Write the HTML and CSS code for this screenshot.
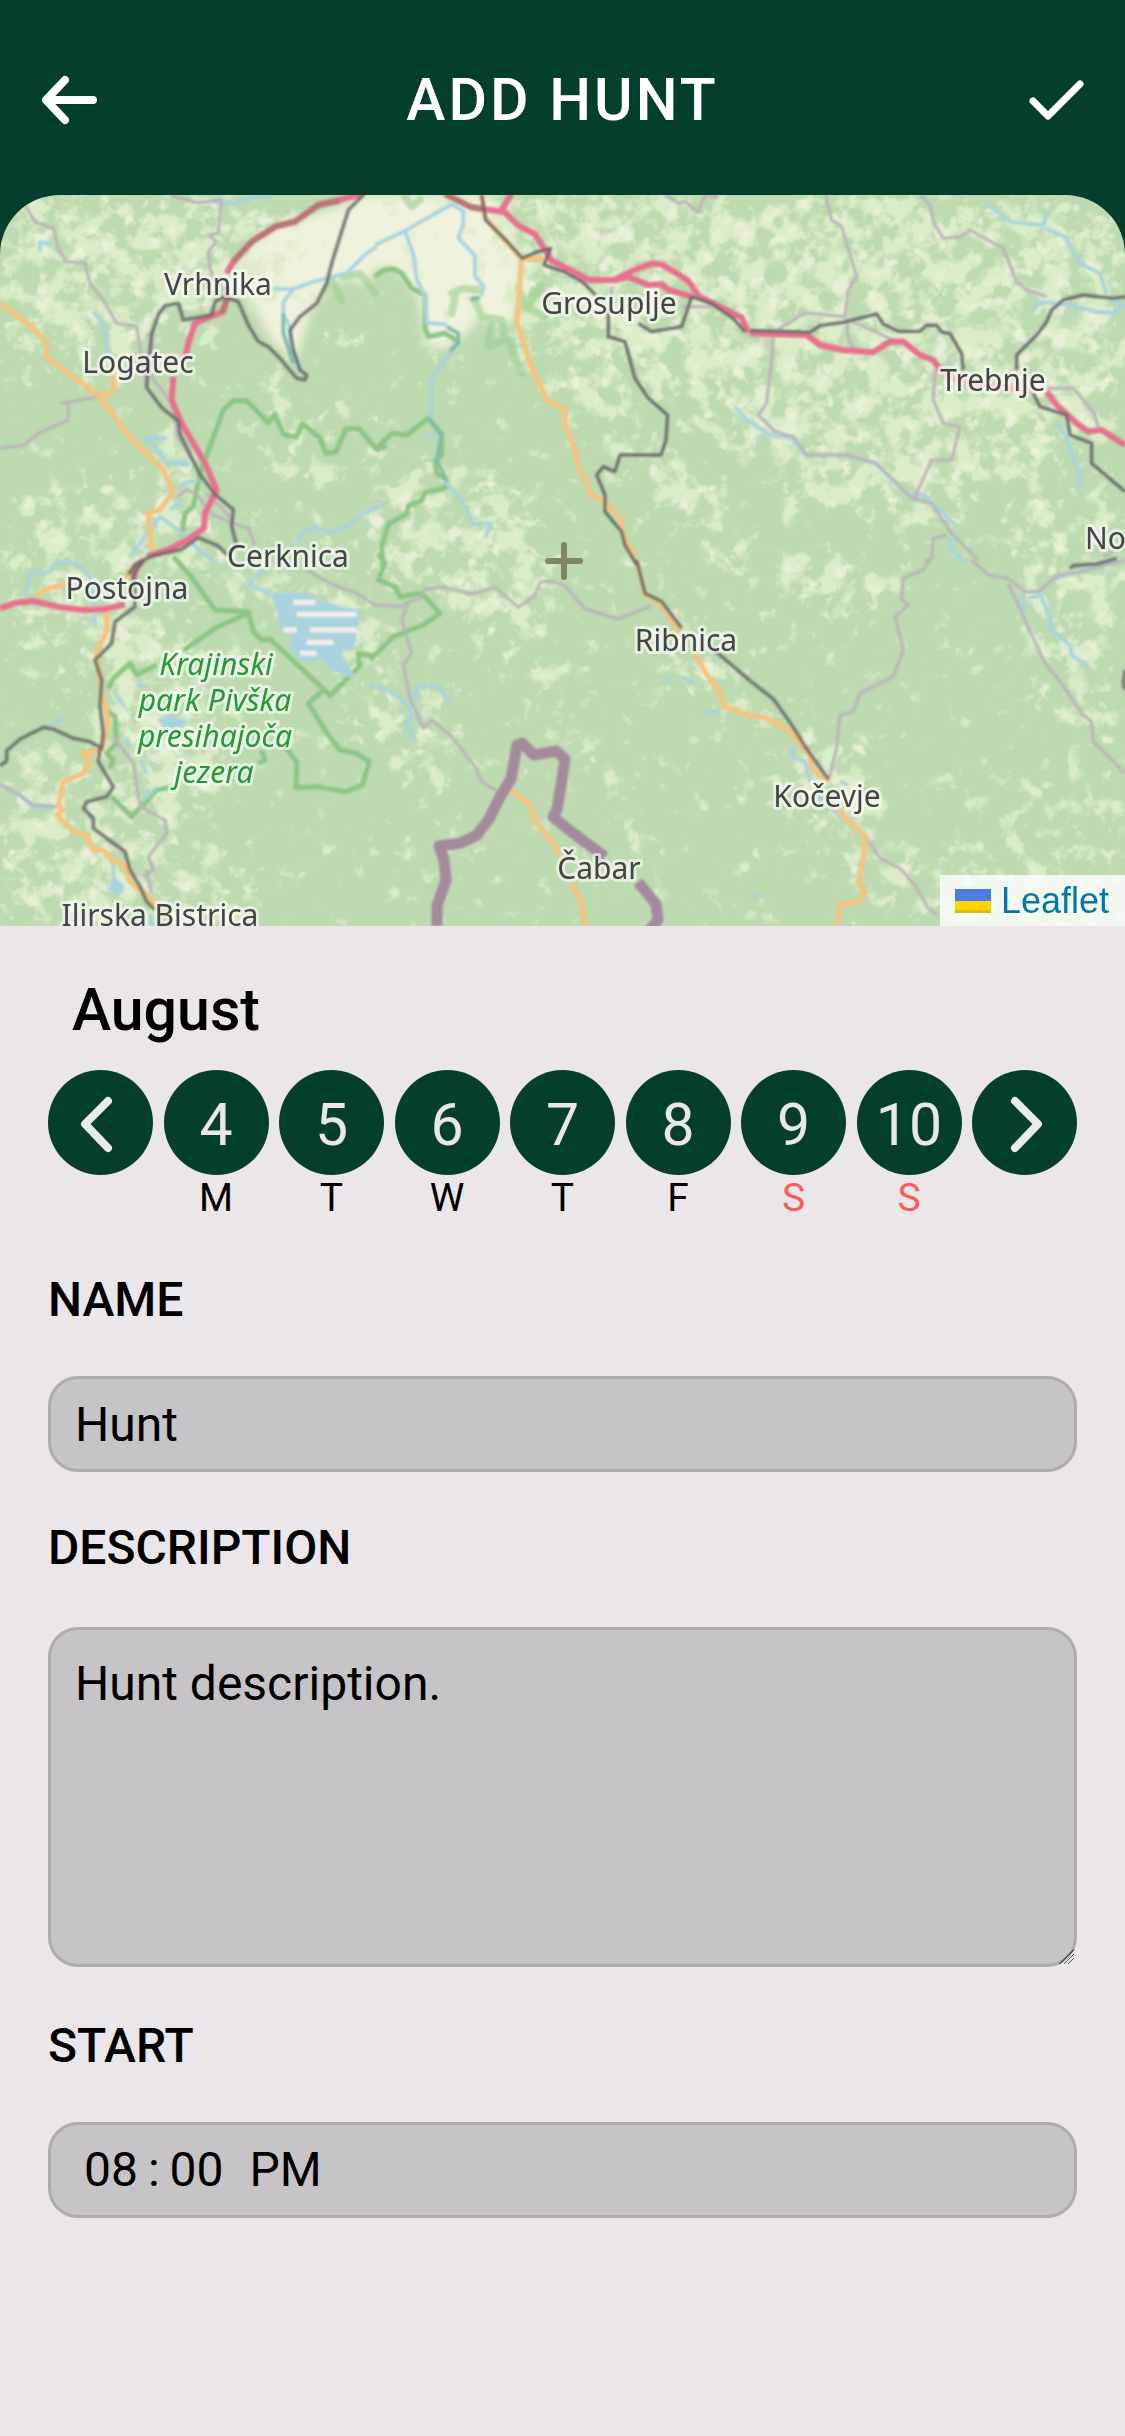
FILE: index.html
```html
<!DOCTYPE html>
<html lang="en">
<head>
<meta charset="utf-8">
<meta name="viewport" content="width=device-width, initial-scale=1">
<title>Add hunt</title>
<link rel="stylesheet" href="styles.css">
</head>
<body>
<header class="topbar">
  <button class="icon-button" type="button" aria-label="Back">
    <svg class="icon" viewBox="0 0 60 60"><path d="M26 10 7 30l19 20M8 30h46" stroke-width="8"/></svg>
  </button>
  <h1 class="title">ADD HUNT</h1>
  <button class="icon-button" type="button" aria-label="Save">
    <svg class="icon" viewBox="0 0 60 60"><path d="M7 31l15 15L54 14" stroke-width="7"/></svg>
  </button>
</header>

<main>
  <section class="map" aria-label="Map">
    <svg class="map-canvas" viewBox="0 0 1125 731">
      <defs>
        <filter id="meadow" x="0" y="0" width="1125" height="731" filterUnits="userSpaceOnUse" color-interpolation-filters="sRGB">
          <feGaussianBlur in="SourceAlpha" stdDeviation="14" result="density"/>
          <feTurbulence type="fractalNoise" baseFrequency=".045" numOctaves="4" seed="8"/>
          <feColorMatrix values="0 0 0 0 0  0 0 0 0 0  0 0 0 0 0  1 0 0 0 0" result="noise"/>
          <feComposite in="density" in2="noise" operator="arithmetic" k2=".3" k3="1"/>
          <feComponentTransfer result="patch"><feFuncA type="linear" slope="5" intercept="-3.55"/></feComponentTransfer>
          <feFlood flood-color="#dbedc8"/>
          <feComposite in2="patch" operator="in"/>
        </filter>
        <filter id="field" x="0" y="0" width="1125" height="731" filterUnits="userSpaceOnUse" color-interpolation-filters="sRGB">
          <feGaussianBlur in="SourceAlpha" stdDeviation="14" result="density"/>
          <feTurbulence type="fractalNoise" baseFrequency=".06" numOctaves="3" seed="21"/>
          <feColorMatrix values="0 0 0 0 0  0 0 0 0 0  0 0 0 0 0  1 0 0 0 0" result="noise"/>
          <feComposite in="density" in2="noise" operator="arithmetic" k2=".26" k3="1"/>
          <feComponentTransfer result="patch"><feFuncA type="linear" slope="4" intercept="-3.1"/></feComponentTransfer>
          <feFlood flood-color="#ebf1da"/>
          <feComposite in2="patch" operator="in"/>
        </filter>
        <filter id="soften"><feGaussianBlur stdDeviation="1"/></filter>
        <filter id="soft-edge" x="-10%" y="-10%" width="120%" height="120%"><feGaussianBlur stdDeviation="5"/></filter>
        <g id="open-land">
          <path d="M0 0h290v100l-60 10-60 40-60 30-40-20L0 90z"/>
          <path d="M0 90l60 60-20 50-40-10z" fill-opacity=".7"/>
          <path d="M500 0h625v230l-60 40-130 30-90 20-140-90-120-60-90-60z"/>
          <path d="M740 220l180 20 60 30-20 80-120-40-60 20z" fill-opacity=".7"/>
          <path d="M500 110l70 10 60 90 80 110 60 50-40 20-100-110-80-80z" fill-opacity=".8"/>
          <path d="M642 255l50 10 70 110-24 4-64-60z"/>
          <path d="M380 260l150 40 30 100-40 60-40-20-60-60-60 10z" fill-opacity=".95"/>
          <path d="M245 170h50l60 100-40 50-50-40z" fill-opacity=".6"/>
          <path d="M20 290h120l50 30-30 60-140 30z" fill-opacity=".8"/>
          <path d="M150 240h40l40 130-50 10z"/>
          <path d="M225 375h60l80 30 20 40-30 30-60-50-70-20z"/>
          <path d="M0 390h60l40 30-10 60-60-20-30-10z" fill-opacity=".8"/>
          <path d="M90 370l40 30 70 40 20 110-10 80-80 10-30-100z"/>
          <path d="M0 540l90 10 30 80 60 20 80 30v51H0z" fill-opacity=".85"/>
          <path d="M1010 300h115v250l-90-40-20-90z" fill-opacity=".8"/>
          <path d="M1040 560h85v171H960l-20-80z" fill-opacity=".5"/>
          <path d="M750 360h120l20 40-60 40-60-40z" fill-opacity=".9"/>
          <path d="M500 440l40-10 50 110 80 140-20 6-90-140z" fill-opacity=".6"/>
          <path d="M370 430l60 60 40 100-50 10-60-60z" fill-opacity=".8"/>
          <path d="M650 420l60 30 40 60-20 20-50-40z"/>
          <path d="M790 530l80 20 10 80 80 80-50 21-80-80-60-60z" fill-opacity=".9"/>
          <path d="M0 0h1125v731H0z" fill-opacity=".2"/>
        </g>
      </defs>

      <rect width="1125" height="731" fill="#bddab1"/>
      <!-- Ljubljana marshes -->
      <path class="plain" filter="url(#soft-edge)" d="M360 0h130l18 22 12 40 2 24-8 40-20 6-16-12-8 16-24 18-20-4-8-48-24-30-18 2-10 16-16-6-18 4-20 26-16 52-24-20-24-44-20-6 6-26 40-38 70-22z"/>
      <use href="#open-land" filter="url(#meadow)"/>
      <use href="#open-land" filter="url(#field)"/>

      <g filter="url(#soften)">
      <!-- Park boundaries -->
      <g class="park">
        <g transform="translate(0 -5) scale(.3333)">
          <path d="M545 1040l10-70 25-20 20-100 70-190 30-28h40l65 66 20-26 25 60 38 10 20-40 50 40 20 48 30-4 30-70h40l52 62 30-10"/>
          <path d="M975 300l20-30 30 60M1030 260l50-10 45 60" class="grove"/>
        </g>
        <g transform="translate(375 -5) scale(.3333)">
          <path d="M0 260q40-40 80-10l30 45 40 20v100l10 25 50-10 40 25M0 780l50-50 45 5 65-50 40 50v60l-20 20 5 35 30 20-5 25-60 12-10 25-40 15-5 25-55 30-20 70 5 60"/>
          <path d="M230 310l35-15 45 5M240 320l-10 50M300 330l20 50 60 10 10 60-50 20M350 400l-10 60M430 290l20 60 50-60M400 450l40 100M450 350l60 30M90 20l20 30 25-20" class="grove"/>
        </g>
        <g transform="translate(0 365) scale(.3333)">
          <path d="M520 -10l50 55 75 105 100 5 15 60 25 25 25-3 155 145 25 25 90-90-5-35 50 5M745 160l-95 42-100 70M470 315l-60 30-20-35-50 45-15 30M965 395l-40 35 60 95 35 45 50 10 38 25-20 70-50 20-90-15-60 3 3-75-40-55M785 570l10 30-20 10M520 680l-50 10-75 80-60-60M320 450l25 20 5 80-30 30 20 20-10 25"/>
        </g>
        <g transform="translate(375 365) scale(.3333)">
          <path d="M10 -20l20 30-20 50 50 20 15 30 60-10 20 15 40 45-50 35-90 35-70 70"/>
        </g>
      </g>

      <!-- Rivers and lakes -->
      <g class="water">
        <g transform="translate(0 -5) scale(.3333)">
          <path d="M120 185v-28l35 5M280 365l20 25 15 45 10 60M640 35l60 5 80-20 40 0M820 297h60l60-22 100-25 60-60 30-20M880 297l-30 40v35l20 40v50l40 90M435 745l30 25 35 50 60-5M440 740l60 5M520 820l50 5M540 900l10-20 45-10M510 960l40-30M390 1100l90-120 60 45 70 65 40 30M890 1065l20-40 40-15 40 20 60-25 40-35 50-20"/>
          <path d="M850 370v60l30 90" class="reed"/>
        </g>
        <g transform="translate(375 -5) scale(.3333)">
          <path d="M0 165l90-42 60-35 80-45 35 20v40l-15 40 50 55v60l25 30-5 30M90 123l25 70 10 75 25 50 5 80 60 5M240 460l-30 50-40 55v120M210 875l50 55 35 70h55l-20 45M1080 650l45 50M0 955l35-20M155 740l25-5"/>
          <path d="M215 410l35 20v30l-25 25M160 685l40 45-15 80 30 60M285 328l30-5" class="reed"/>
        </g>
        <g transform="translate(750 -5) scale(.3333)">
          <path d="M710 40l70 55 100 12 12-45M885 115l60 25 45 80 60 30 20 65M845 360l25-25 90 10 80 20 50 5 30-25-40-20M0 695l60 40 65 10 40 50h120l90 25 100 95h50l90 90M600 1040v30l30 35M915 695l35 45 20 60 20 50v40"/>
        </g>
        <g transform="translate(0 365) scale(.3333)">
          <path d="M75 110l15-70 60-5 30-30 50 5 40 40 15 150M790 30l-45 45 80 30M150 495l45-20M350 410l25 30M380 530l10 35M420 600l20 40M430 720l40-40M340 900v90M0 675l60 30 40 40 70-5M1115 375l10 5M453 1060v40M410 375l25 3"/>
          <path d="M825 105h110l10 18 80 22 50 10-10 60-10 50-30-5-5 30 40 60-70-30-20-30-60 10-40-40 15-30-40-30z" class="lake"/>
          <path d="M480 480l30-8 45 14-10 12-55-3zM345 960l20 15v15l-20 10-15-15z" class="lake"/>
          <path d="M880 127h66M890 163h180M850 210h40M930 210h140M920 247h80M900 280h50" class="stripe"/>
        </g>
        <g transform="translate(375 365) scale(.3333)">
          <path d="M0 380l40 10 60 45 10 35-20 20 35 55M115 420l15-40h60l35 50M870 345l15 25M920 350l35 20M990 455h40"/>
        </g>
        <g transform="translate(750 365) scale(.3333)">
          <path d="M820 100v60l20 60M835 115l35-10 30 60v40l60 50 5 30 50 35M130 555v40l35 10 15 60M270 665l25 10M200 700l90 90M620 0l30 3M900 60l100-30 100-30M5 1000l20 10"/>
        </g>
      </g>

      <!-- Secondary roads -->
      <g class="road">
        <g transform="translate(0 -5) scale(.3333)">
          <path d="M75 45l30 50 55 20 15 60 25 40 55 5 15 60 40 50 40 70 60 10 10 60 20 120M510 15l80 23 75-8-10 100-30 5 25 20-25 30 5 50 15 40M440 440l25-30M455 430v130l60 80 20 100 40 70M0 775l75-10 40-35 90-40v-50M180 640l120-20M530 920l30-20 30 10 40 60 70 30 45 15 20 50M620 910l80 80"/>
        </g>
        <g transform="translate(375 -5) scale(.3333)">
          <path d="M870 15l40 25 20-5 40 30 20-50 40 5M710 290v40M920 350h90"/>
        </g>
        <g transform="translate(750 -5) scale(.3333)">
          <path d="M225 10l20 80 30 20 45 150-25 40-10 80-120-12-80 50M290 390l5 60 20 30M300 390l140 65M510 15l30 30 10 50 30 50 50-5 30-20 100 55 40 100 30 25 60 20M890 595h80l60 70 20 60M555 540l-5 90 30 70 50 10-25 100h-60l-45 100-10 20M70 440l-5 70-15 130-25 35 50 50 55 15 40 55h120l90 25 105 105 60 15 60 90 80 80M590 1035l-40 10-5 60-20 10M1060 1100l65-30"/>
        </g>
        <g transform="translate(0 365) scale(.3333)">
          <path d="M340 530l60 80 20 130 75 40 5 40-55 70 15 40-30 20M440 930l15 70M0 675l60 30 40 30 70 5M920 30l70 40 80 30 55 35"/>
        </g>
        <g transform="translate(375 365) scale(.3333)">
          <path d="M0 135l80 5 20-15 35-10 15-28 60-5 80 20 70-20 70 60 50-35 15-40 25-5 50 15 60 70 100 30 100-40M100 130l-20 50 30 100-25 35 20 100 40 90 25-25 60 50 70 90 20 45 50 30"/>
        </g>
        <g transform="translate(750 365) scale(.3333)">
          <path d="M540 0l-20 30-60 25-5 60 20 20-40 35 25 100-30 80-100 50-20 55-40 10-10 100-25 100M665 0l50 45 60 10 50 40h40l60-50 70-10 130-35M775 70l50 110 60 130 50 60 60 90 30 25 5 60 95 95M350 835l40 60 60 30 45 50 40 70 30 20"/>
        </g>
      </g>

      <!-- Primary roads -->
      <g class="primary">
        <g transform="translate(0 -5) scale(.3333)">
          <path d="M0 340l95 70 45 50v40l80 60 80 60 40-20v-45M300 620l90 120 100 100 30 65-40 55-35 10 10 110"/>
        </g>
        <g transform="translate(375 -5) scale(.3333)">
          <path d="M320 15l10 65 50 60 60 65 70 5M440 205l-10 140-5 50 20 60 30 90 45 90 50 20v50l30 70 10 60 30 50 5 30 40 15 55 60 5 50 35 60"/>
        </g>
        <g transform="translate(0 365) scale(.3333)">
          <path d="M110 105l40-22 50-10M390 30l-10 30M320 150v60l-30 70 15 120 20 80-20 90-60 10 25 25-20 35-60 25-15 70 15 15-20 15 50 50 40 10 20 45 30 0 35 35 30 10 15 50 50 40 50 60"/>
        </g>
        <g transform="translate(375 365) scale(.3333)">
          <path d="M785 0l25 100 50 35 55 85M960 280l30 55 40 55 20 50 75 27M405 685l60 50 20 55 50 60 20 40M590 970l30 60 10 70"/>
        </g>
        <g transform="translate(750 365) scale(.3333)">
          <path d="M0 465l50 10 60 30 70 80 5 40 50 40M260 740l30 40 55 45-5 70-15 70 20 30-20 30-55 10-10 60"/>
        </g>
      </g>

      <!-- Motorways -->
      <g class="motorway">
        <g transform="translate(0 -5) scale(.3333)">
          <path d="M1095 10l-140 35-70 50-60 15-70 45-55 60-20 35M680 330l-10 35-40 15-45 20-20 60-10 45M520 560l-5 70 30 70 70 120 35 80-35 70-3 45-50 35-60 30-60 20"/>
          <path d="M1020 32l-65 13-70 50-60 15-70 45-55 60M680 290v40l-15 40" class="tunnel"/>
        </g>
        <g transform="translate(375 -5) scale(.3333)">
          <path d="M210 12l80 40 100 15 40 40 50 25 50 80 90 45 20 13h80l50-27 60-22 30 2 50 30 30 20 30 45 90 45 40 20 20 45M380 60l30-50M720 270l40-10 60 25 40-2 20 17 70 20"/>
          <path d="M210 12l80 40 40 6" class="tunnel"/>
        </g>
        <g transform="translate(750 -5) scale(.3333)">
          <path d="M0 430l170 5 40 30 70 15 90 7 50-32h40l50 40 40 15 20 30M890 605l30 40 60 55 35 25 40-5 70 45"/>
          <path d="M570 545l60 30 140 20 80 5" class="faded"/>
        </g>
        <g transform="translate(0 365) scale(.3333)">
          <path d="M430 0l-25 30-3 30M0 145l50-17 50-5 70 17 80 10 60-2 65-15"/>
        </g>
      </g>

      <!-- Railways -->
      <g class="rail">
        <g transform="translate(0 -5) scale(.3333)">
          <path d="M1090 15l-45 45-50 160-15 60-30 60-50 40-30 40 10 60 20 60 20 15-5 15-25-5-50-60-35-35-30-15-30-50-30-70-40-15-30 15-10 40-85 15-15-50-40 8-20 25-20 60-10 90-5 70 45 60 50 40 5 40 60 120 45 60 55 45-5 50 15 60-30 25-25-25-60-25-50 35-90 20-50 25-20 30"/>
        </g>
        <g transform="translate(375 -5) scale(.3333)">
          <path d="M320 15l12 75 60 60 50 55 45-20 40-10-20 50 60 20 55 30 40 40M700 350v90l50 15 30 110 40 60 58 50-5 75-15 45H735l-15 50-35-15-20 25 25 60v50l50 60 10 40 35 60M790 400l40 25 90-15 20-60 10-30 60 20 65 45 35 40"/>
        </g>
        <g transform="translate(750 -5) scale(.3333)">
          <path d="M0 422l100 2 80 3 30-20 70-10 100-25 20 30 45 22h65l20-18h30l15 20 25 5 35 60 5 50M800 540v-45l60-60 30-40 15-35 35-30 60-15 90 10 40-5M850 610l20 40 80 25 10 60 65 25v60l100 85"/>
        </g>
        <g transform="translate(0 365) scale(.3333)">
          <path d="M430 0l-30 45 5 95-60 45-10 65-50 50 20 60-5 80 10 80-5 45-35-20-50-10-60-28-30-5-70 35-40 35v30l-20 15M300 565l-5 40 45 75-20 30-60 15-10 20 30 30 0 30 95 70 15 55 30 50 20 45 25 25"/>
        </g>
        <g transform="translate(375 365) scale(.3333)">
          <path d="M785 0l25 100 50 25 60 80M1000 255l125 107"/>
        </g>
        <g transform="translate(750 365) scale(.3333)">
          <path d="M0 362l70 55 50 70 50 80 50 70 15 20M960 25l10-8 70-5 60-17M1125 330l-5 40 5 20"/>
        </g>
      </g>

      <path class="border" d="M437 731v-20l9-26-2-20-5-14 22-3 16-8 12-16 12-24 10-16 6-34 5-2 12 12 22-4 9 8-4 26-4 24-4 8 20 16 16 12 16 12M638 687l18 22 2 16-10 12"/>
      </g>

      <g class="town" text-anchor="middle">
        <text x="218" y="100">Vrhnika</text>
        <text x="138" y="178">Logatec</text>
        <text x="609" y="119">Grosuplje</text>
        <text x="993" y="196">Trebnje</text>
        <text x="288" y="372">Cerknica</text>
        <text x="127" y="404">Postojna</text>
        <text x="686" y="456">Ribnica</text>
        <text x="827" y="612">Kočevje</text>
        <text x="599" y="684">Čabar</text>
        <text x="160" y="731">Ilirska Bistrica</text>
        <text x="1085" y="354" text-anchor="start">No</text>
      </g>
      <g class="town reserve" text-anchor="middle">
        <text x="216" y="480">Krajinski</text>
        <text x="215" y="516">park Pivška</text>
        <text x="215" y="552">presihajoča</text>
        <text x="214" y="588">jezera</text>
      </g>

      <path class="cross" d="M564 350v32M548 366h32"/>
    </svg>
    <a class="attribution" href="https://leafletjs.com">
      <svg class="flag" viewBox="0 0 12 8" preserveAspectRatio="none"><path fill="#4C7BE1" d="M0 0h12v4H0z"/><path fill="#FFD500" d="M0 4h12v3H0z"/><path fill="#E0BC00" d="M0 7h12v1H0z"/></svg>
      Leaflet
    </a>
  </section>

  <form class="form">
    <h2 class="month">August</h2>
    <div class="days">
      <button class="circle" type="button" aria-label="Previous week">
        <svg class="chevron" viewBox="0 0 60 60"><path d="M37 7 14 30l23 24"/></svg>
      </button>
      <div class="day"><button class="circle" type="button">4</button><span class="weekday">M</span></div>
      <div class="day"><button class="circle" type="button">5</button><span class="weekday">T</span></div>
      <div class="day"><button class="circle" type="button">6</button><span class="weekday">W</span></div>
      <div class="day"><button class="circle" type="button">7</button><span class="weekday">T</span></div>
      <div class="day"><button class="circle" type="button">8</button><span class="weekday">F</span></div>
      <div class="day"><button class="circle" type="button">9</button><span class="weekday weekend">S</span></div>
      <div class="day"><button class="circle" type="button">10</button><span class="weekday weekend">S</span></div>
      <button class="circle" type="button" aria-label="Next week">
        <svg class="chevron" viewBox="0 0 60 60"><path d="M20 7l23 23-23 24"/></svg>
      </button>
    </div>

    <label class="label" for="name">NAME</label>
    <input class="control" id="name" type="text" value="Hunt">

    <label class="label" for="description">DESCRIPTION</label>
    <textarea class="control area" id="description">Hunt description.</textarea>

    <label class="label" for="start">START</label>
    <input class="control time" id="start" type="time" value="20:00">
  </form>
</main>
</body>
</html>
```
FILE: styles.css
```css
* {
  box-sizing: border-box;
}

body {
  margin: 0;
  min-height: 100vh;
  background: #ebe6ea;
  color: #000;
  font-family: Roboto, "Liberation Sans", sans-serif;
}

button {
  padding: 0;
  border: 0;
  background: none;
  font-family: inherit;
  cursor: pointer;
}

.topbar {
  display: flex;
  align-items: center;
  justify-content: space-between;
  height: 195px;
  padding: 5px 39px 0;
  background: #043f2d;
  color: #fff;
}

.title {
  margin: 0;
  font-size: 59px;
  line-height: 72px;
  font-weight: 500;
  letter-spacing: 3px;
}

.icon-button,
.icon {
  display: block;
  width: 60px;
  height: 60px;
}

.icon,
.chevron {
  fill: none;
  stroke: #fff;
  stroke-linecap: round;
  stroke-linejoin: round;
}

.map {
  position: relative;
  background: #043f2d;
}

.map-canvas {
  display: block;
  width: 100%;
  height: auto;
  border-radius: 60px 60px 0 0;
}

.map-canvas path {
  stroke-linejoin: round;
}

.plain { fill: #eff2dc; }

.park, .water, .road, .primary, .motorway, .rail { fill: none; }
.park { stroke: #8cc584; stroke-width: 15; }
.park .grove { stroke: #9bcf8e; stroke-width: 22; stroke-opacity: .6; stroke-linecap: round; }
.water { stroke: #a9d3de; stroke-width: 11; }
.water .reed { stroke: #7fbba8; }
.water .lake { fill: #a9d3de; }
.water .stripe { stroke: #f2efe9; stroke-width: 16; }
.road { stroke: #bbb3b8; stroke-width: 9; }
.primary { stroke: #f7c27d; stroke-width: 15; }
.motorway { stroke: #e8708d; stroke-width: 18; }
.motorway .tunnel { stroke: #b87774; }
.motorway .faded { stroke: #f3b6b6; }
.rail { stroke: #666; stroke-width: 10; stroke-opacity: .9; }
.border { fill: none; stroke: #a48a9d; stroke-width: 11; }
.cross { fill: none; stroke: #82875e; stroke-width: 6; stroke-linecap: round; }

.town {
  font-family: "Noto Sans", sans-serif;
  font-size: 30px;
  fill: #444;
  stroke: #fff;
  stroke-opacity: .6;
  stroke-width: 6px;
  stroke-linejoin: round;
  paint-order: stroke;
}

.reserve {
  font-style: italic;
  fill: #239a35;
}

.attribution {
  position: absolute;
  right: 0;
  bottom: 0;
  display: flex;
  align-items: center;
  gap: 10px;
  height: 51px;
  padding: 0 16px 0 15px;
  background: rgba(255, 255, 255, .8);
  color: #0078a8;
  font-family: "Liberation Sans", sans-serif;
  font-size: 36px;
  line-height: 51px;
  text-decoration: none;
}

.flag {
  width: 36px;
  height: 24px;
}

.form {
  display: flex;
  flex-direction: column;
  padding: 48px;
}

.month {
  margin: 0 24px 24px;
  font-size: 59px;
  line-height: 72px;
  font-weight: 500;
}

.days {
  display: flex;
  align-items: flex-start;
  justify-content: space-between;
}

.day {
  display: flex;
  flex-direction: column;
  align-items: center;
}

.circle {
  display: flex;
  align-items: center;
  justify-content: center;
  width: 105px;
  height: 105px;
  padding-top: 3px;
  border-radius: 50%;
  background: #043f2d;
  color: #ebe6ea;
  font-size: 59px;
}

.chevron {
  width: 60px;
  height: 60px;
  stroke: #e9ebec;
  stroke-width: 8;
}

.weekday {
  font-size: 39px;
  line-height: 46px;
}

.weekend {
  color: #f55f57;
}

.label {
  margin: 48px 0;
  font-size: 48px;
  line-height: 56px;
  font-weight: 500;
}

.days + .label {
  margin-top: 51px;
}

.control {
  display: block;
  width: 100%;
  height: 96px;
  padding: 0 24px;
  border: 3px solid #aeacaf;
  border-radius: 30px;
  background: #c6c4c7;
  color: #000;
  font-family: inherit;
  font-size: 48px;
  line-height: 56px;
}

.area {
  height: 340px;
  margin: 3px 0;
  padding-top: 26px;
  resize: vertical;
}

.area::-webkit-resizer {
  background: linear-gradient(135deg, transparent 50%, #555 50% 55%, transparent 55% 64%, #555 64% 69%, transparent 69% 78%, #555 78% 83%, transparent 83%);
}

.time::-webkit-calendar-picker-indicator {
  display: none;
}

.time::-webkit-datetime-edit {
  padding: 0 6px;
}

.time::-webkit-datetime-edit-fields-wrapper {
  padding: 0;
}

.time::-webkit-datetime-edit-text {
  padding: 0 7px;
}

.time::-webkit-datetime-edit-hour-field,
.time::-webkit-datetime-edit-minute-field,
.time::-webkit-datetime-edit-ampm-field {
  padding: 0 3px;
}
```
